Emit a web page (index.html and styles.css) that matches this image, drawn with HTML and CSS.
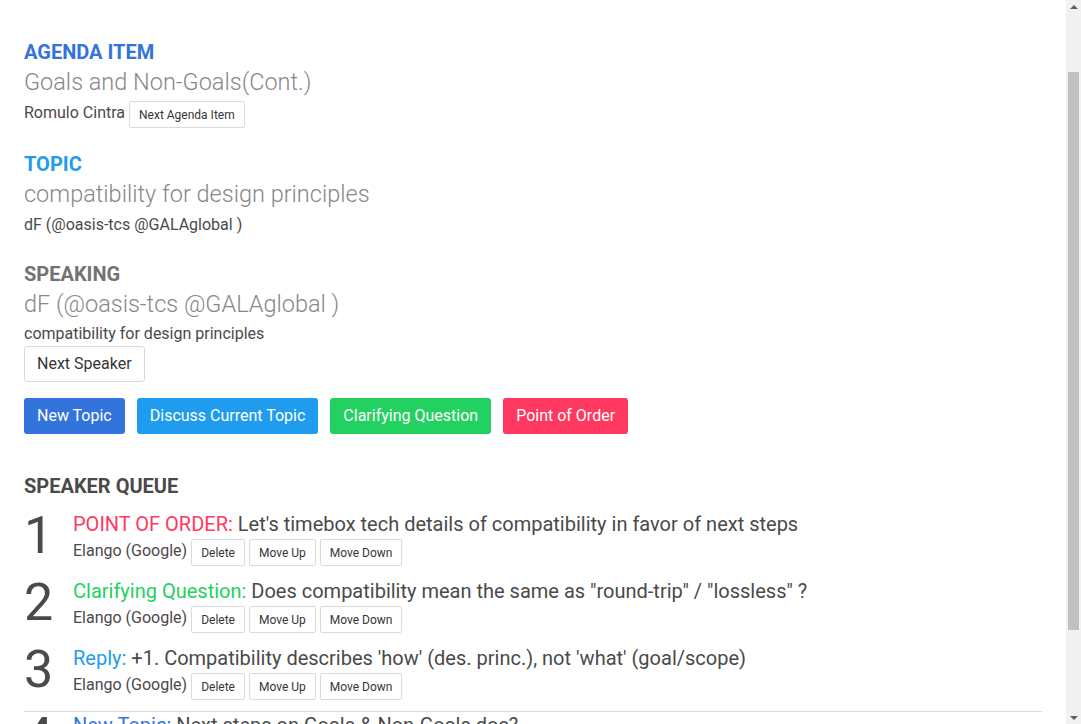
FILE: index.html
```html
<!DOCTYPE html>
<html lang="en">
<head>
<meta charset="utf-8">
<title>Agenda</title>
<link rel="stylesheet" href="styles.css">
</head>
<body>
<div class="frame">
<div class="viewport">
<main class="page">
  <section class="section">
    <h2 class="label label-agenda">AGENDA ITEM</h2>
    <p class="subtitle">Goals and Non-Goals(Cont.)</p>
    <div class="meta meta-fixed">
      <span class="who">Romulo Cintra</span>
      <button class="btn-small">Next Agenda Item</button>
    </div>
  </section>

  <section class="section section-topic">
    <h2 class="label label-topic">TOPIC</h2>
    <p class="subtitle">compatibility for design principles</p>
    <div class="meta meta-fixed">
      <span class="who">dF (@oasis-tcs @GALAglobal )</span>
    </div>
  </section>

  <section class="section section-speaking">
    <h2 class="label label-speaking">SPEAKING</h2>
    <p class="subtitle">dF (@oasis-tcs @GALAglobal )</p>
    <div class="meta">
      <span>compatibility for design principles</span>
    </div>
    <button class="btn btn-plain">Next Speaker</button>
  </section>

  <div class="actions">
    <button class="btn btn-link">New Topic</button>
    <button class="btn btn-info">Discuss Current Topic</button>
    <button class="btn btn-success">Clarifying Question</button>
    <button class="btn btn-danger">Point of Order</button>
  </div>

  <h2 class="label label-queue">SPEAKER QUEUE</h2>

  <ol class="queue">
    <li class="item">
      <div class="num">1</div>
      <div class="item-body">
        <div class="item-title"><span class="t-danger">POINT OF ORDER:</span> Let's timebox tech details of compatibility in favor of next steps</div>
        <div class="meta">
          <span class="who">Elango (Google)</span>
          <button class="btn-small">Delete</button>
          <button class="btn-small">Move Up</button>
          <button class="btn-small">Move Down</button>
        </div>
      </div>
    </li>
    <li class="item">
      <div class="num">2</div>
      <div class="item-body">
        <div class="item-title"><span class="t-success">Clarifying Question:</span> Does compatibility mean the same as "round-trip" / "lossless" ?</div>
        <div class="meta">
          <span class="who">Elango (Google)</span>
          <button class="btn-small">Delete</button>
          <button class="btn-small">Move Up</button>
          <button class="btn-small">Move Down</button>
        </div>
      </div>
    </li>
    <li class="item item-last-group">
      <div class="num">3</div>
      <div class="item-body">
        <div class="item-title"><span class="t-info">Reply:</span> +1. Compatibility describes 'how' (des. princ.), not 'what' (goal/scope)</div>
        <div class="meta">
          <span class="who">Elango (Google)</span>
          <button class="btn-small">Delete</button>
          <button class="btn-small">Move Up</button>
          <button class="btn-small">Move Down</button>
        </div>
      </div>
    </li>
    <li class="item item-divided">
      <div class="num">4</div>
      <div class="item-body">
        <div class="item-title"><span class="t-link">New Topic:</span> Next steps on Goals &amp; Non-Goals doc?</div>
      </div>
    </li>
  </ol>
</main>
</div>
<div class="scrollbar" aria-hidden="true">
  <div class="sb-btn"><span class="sb-arrow sb-up"></span></div>
  <div class="sb-track"><div class="sb-thumb"></div></div>
  <div class="sb-btn"><span class="sb-arrow sb-down"></span></div>
</div>
</div>
</body>
</html>
```

FILE: styles.css
```css
html, body {
  margin: 0;
  padding: 0;
  height: 100%;
  overflow: hidden;
}

body {
  font-family: Roboto, "Liberation Sans", sans-serif;
  font-size: 16px;
  line-height: 1.5;
  color: #4a4a4a;
  background: #ffffff;
}

.frame {
  display: flex;
  height: 100vh;
  overflow: hidden;
}

.viewport {
  flex: 1;
  min-width: 0;
  overflow: hidden;
}

/* scrollbar column */
.scrollbar {
  flex: 0 0 15px;
  display: flex;
  flex-direction: column;
  background: #f1f1f1;
}

.sb-btn {
  height: 15px;
  display: flex;
  align-items: center;
  justify-content: center;
}

.sb-arrow {
  width: 0;
  height: 0;
  border-left: 4px solid transparent;
  border-right: 4px solid transparent;
}

.sb-up {
  border-bottom: 4px solid #5f5f5f;
  margin-top: -2px;
}

.sb-down {
  border-top: 4px solid #5f5f5f;
  margin-top: 2px;
}

.sb-track {
  flex: 1;
  padding: 57px 2px 0;
}

.sb-thumb {
  height: 558px;
  background: #c1c1c1;
}

/* page */
.page {
  padding: 40px 24px 40px;
}

.section {
  margin-bottom: 24px;
}

.section-topic {
  margin-bottom: 23px;
}

.section-speaking {
  margin-bottom: 0;
}

.label {
  margin: 0;
  font-size: 20px;
  font-weight: 700;
  line-height: 25px;
}

.label-agenda { color: #3273dc; }
.label-topic { color: #209cee; }
.label-speaking { color: #737373; }
.label-queue { color: #4a4a4a; margin-top: 40px; }

.subtitle {
  margin: 2px 0 0;
  font-size: 23.5px;
  font-weight: 300;
  line-height: 30px;
  color: #888888;
}

.meta {
  display: flex;
  align-items: flex-start;
  gap: 4px;
  margin-top: 3px;
  line-height: 24px;
}

.meta-fixed {
  min-height: 27px;
}

.who {
  margin-top: 1px;
}

button {
  font-family: inherit;
  cursor: pointer;
}

.btn-small {
  box-sizing: border-box;
  height: 27px;
  margin-top: 1px;
  padding: 0 9px;
  display: inline-flex;
  align-items: center;
  font-size: 12px;
  line-height: 18px;
  color: #363636;
  background: #ffffff;
  border: 1px solid #dbdbdb;
  border-radius: 2px;
}

.btn {
  box-sizing: border-box;
  height: 36px;
  padding: 0 12px;
  display: inline-flex;
  align-items: center;
  font-size: 16px;
  line-height: 24px;
  border: 1px solid transparent;
  border-radius: 3px;
  color: #ffffff;
}

.btn-plain {
  color: #363636;
  background: #ffffff;
  border-color: #dbdbdb;
}

.btn-link { background: #3273dc; }
.btn-info { background: #209cee; }
.btn-success { background: #23d160; }
.btn-danger { background: #ff3860; }

.actions {
  display: flex;
  gap: 12px;
  margin-top: 16px;
}

.queue {
  list-style: none;
  margin: 13px 0 0;
  padding: 0;
}

.item {
  display: flex;
  margin-bottom: 13px;
}

.item-last-group {
  margin-bottom: 0;
  padding-bottom: 11px;
}

.item-divided {
  border-top: 1px solid #dbdbdb;
  padding-top: 1px;
}

.num {
  flex: 0 0 49px;
  font-size: 52px;
  line-height: 48px;
  color: #4a4a4a;
}

.item-body {
  flex: 1;
  min-width: 0;
}

.item-title {
  font-size: 20px;
  line-height: 25px;
}

.item .meta {
  margin-top: 0;
}

.item .who {
  margin-top: 2px;
}

.item .btn-small {
  margin-top: 2px;
}

.t-danger { color: #ff3860; }
.t-success { color: #23d160; }
.t-info { color: #209cee; }
.t-link { color: #3273dc; }
```
